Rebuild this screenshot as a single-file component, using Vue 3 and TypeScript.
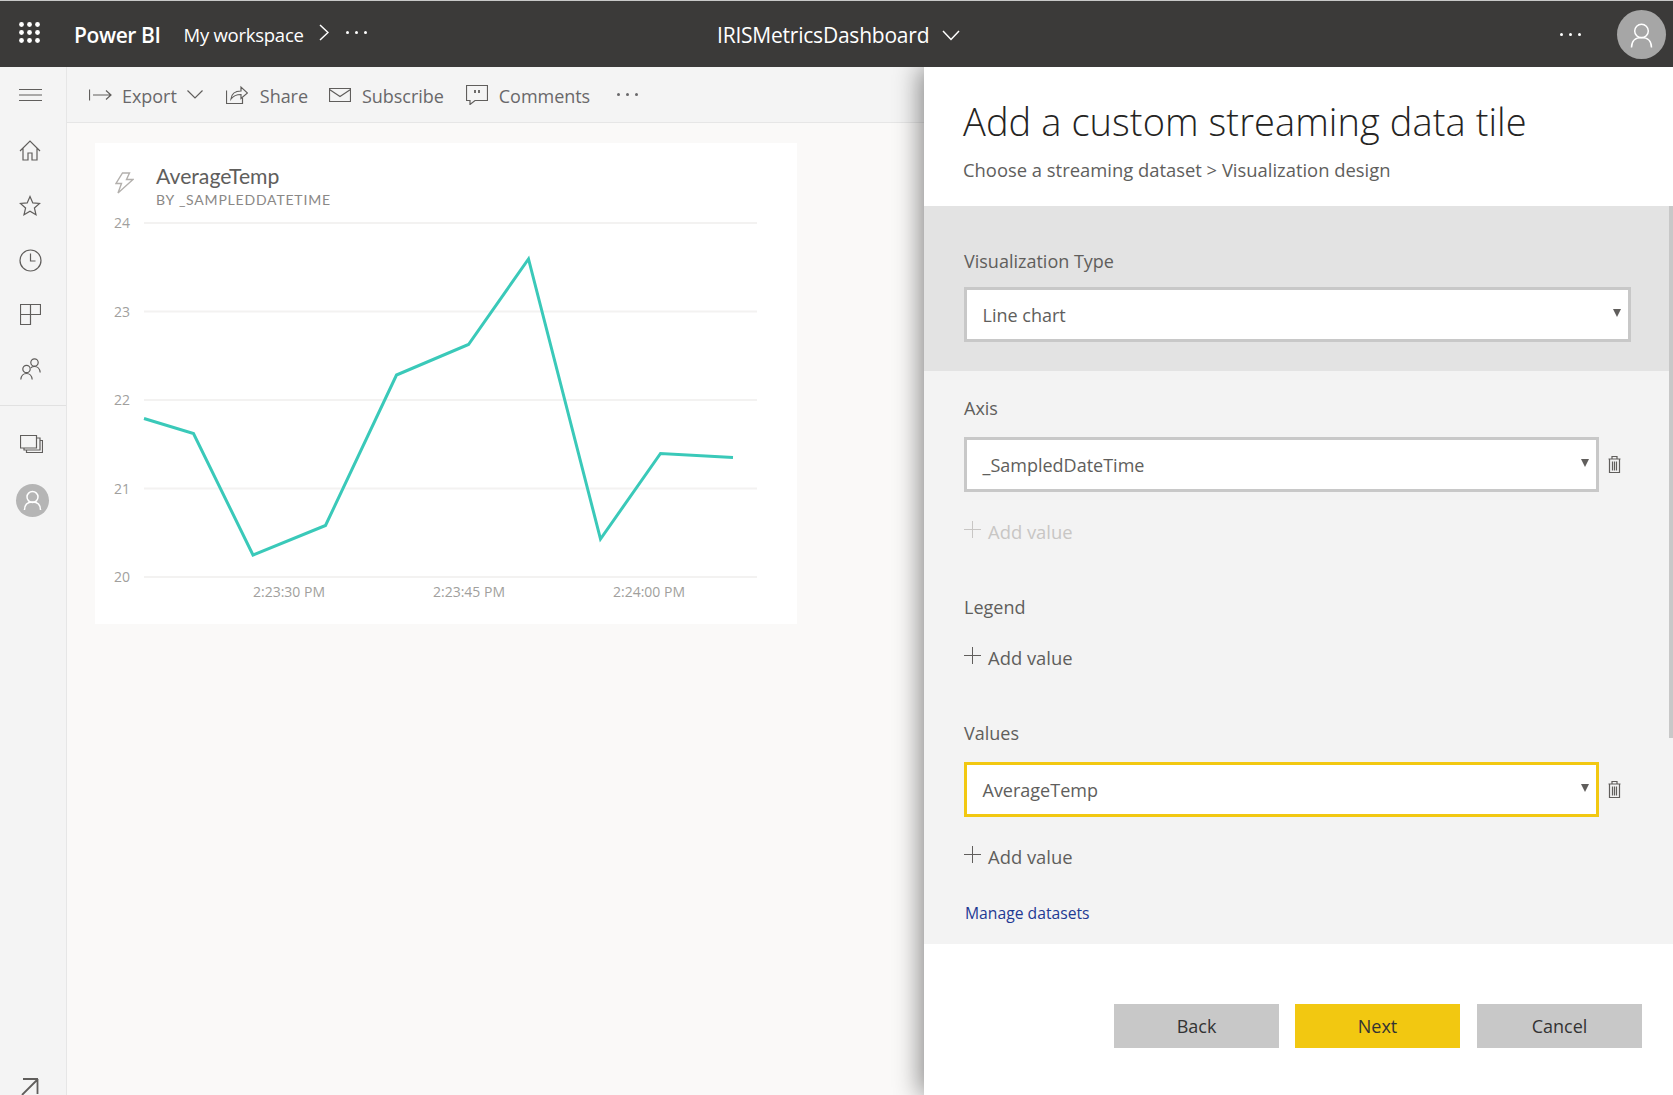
<template>
  <div class="app">
    <header class="topbar">
      <svg class="waffle" width="21" height="21" viewBox="0 0 21 21">
        <g fill="#fff">
          <template v-for="row in [2.5, 10.5, 18.5]" :key="row">
            <circle v-for="col in [2.5, 10.5, 18.5]" :key="col" :cx="col" :cy="row" r="2.4" />
          </template>
        </g>
      </svg>
      <span class="brand">Power BI</span>
      <span class="crumb">My workspace</span>
      <svg class="crumb-chevron" width="10" height="17" viewBox="0 0 10 17">
        <path d="M1 1l8 7.5L1 16" fill="none" stroke="#fff" stroke-width="1.5" />
      </svg>
      <span class="dots crumb-dots"><i></i><i></i><i></i></span>
      <span class="report-name">IRISMetricsDashboard</span>
      <svg class="name-chevron" width="18" height="11" viewBox="0 0 18 11">
        <path d="M1 1l8 8.5L17 1" fill="none" stroke="#fff" stroke-width="1.5" />
      </svg>
      <span class="dots top-dots"><i></i><i></i><i></i></span>
      <span class="top-avatar">
        <svg width="49" height="49" viewBox="0 0 49 49">
          <circle cx="24.5" cy="21" r="6.8" fill="none" stroke="#fff" stroke-width="1.5" />
          <path d="M14.5 37.5c0-6.5 4-10 10-10s10 3.500 10 10" fill="none" stroke="#fff" stroke-width="1.5" />
        </svg>
      </span>
    </header>

    <div class="body">
      <nav class="sidebar">
        <div class="side-slot first">
          <svg width="24" height="12" viewBox="0 0 24 12">
            <path d="M0 .5h23M0 6h23M0 11.500h23" stroke="#605e5c" stroke-width="1" />
          </svg>
        </div>
        <div class="side-slot">
          <svg width="22" height="21" viewBox="0 0 22 21" class="ico">
            <path d="M1 11L11 1l10 10M4 8.500V20h5v-7h4v7h5V8.500" />
          </svg>
        </div>
        <div class="side-slot">
          <svg width="22" height="22" viewBox="0 0 22 22" class="ico">
            <path d="M11 1.500l2.800 6.400 6.800.6-5.200 4.500 1.600 6.800L11 16.200l-6 3.600 1.600-6.800L1.400 8.500l6.800-.6z" />
          </svg>
        </div>
        <div class="side-slot">
          <svg width="23" height="23" viewBox="0 0 23 23" class="ico">
            <circle cx="11.500" cy="11.500" r="10.500" />
            <path d="M11.500 4.500v7.500h5" />
          </svg>
        </div>
        <div class="side-slot tight">
          <svg width="21" height="21" viewBox="0 0 21 21" class="ico">
            <path d="M.5.500h20v10h-10v10H.5zM.5 10.500h10M10.500.5v10" />
          </svg>
        </div>
        <div class="side-slot">
          <svg width="21" height="22" viewBox="0 0 21 22" class="ico">
            <circle cx="6.500" cy="11" r="3.700" />
            <path d="M.8 21.500c.4-3.600 2.400-6 5.700-6s5.300 2.400 5.700 6" />
            <circle cx="14.500" cy="4.500" r="3.700" />
            <path d="M10.800 9.800c1-.8 2.300-1.300 3.700-1.300 3.300 0 5.300 2.400 5.700 6" />
          </svg>
        </div>
        <div class="side-divider"></div>
        <div class="side-slot stack-slot">
          <svg width="23" height="18" viewBox="0 0 23 18" class="ico">
            <path d="M.5.500h16v12.500H.5zM17 3h3v12H4v-2M20 5.500h2.500v12h-16V15" />
          </svg>
        </div>
        <div class="side-slot avatar-slot">
          <span class="side-avatar">
            <svg width="33" height="33" viewBox="0 0 33 33">
              <circle cx="16.500" cy="13" r="5.500" fill="none" stroke="#fff" stroke-width="1.500" />
              <path d="M8.500 26c0-5 3-8 8-8s8 3 8 8" fill="none" stroke="#fff" stroke-width="1.500" />
            </svg>
          </span>
        </div>
        <svg class="expand" width="19" height="18" viewBox="0 0 19 18">
          <path d="M2 1h15M17 1L1 17M16.500 1v15" fill="none" stroke="#605e5c" stroke-width="1.800" />
        </svg>
      </nav>

      <main class="main">
        <div class="commandbar">
          <div class="tool export">
            <svg width="23" height="12" viewBox="0 0 23 12" class="ico">
              <path d="M.5.500v11M4 6h18M17 1.500L22 6l-5 4.500" />
            </svg>
            <span>Export</span>
            <svg width="16" height="9" viewBox="0 0 16 9" class="ico">
              <path d="M.5.500L8 8l7.500-7.500" />
            </svg>
          </div>
          <div class="tool">
            <svg width="22" height="19" viewBox="0 0 22 19" class="ico">
              <path d="M.5 5.500v13h16V13M5 14c.5-5 4-8 10-8V2l6.500 6-6.500 5.500V9.500c-4 0-7.500 1-10 4.500z" />
            </svg>
            <span>Share</span>
          </div>
          <div class="tool narrow">
            <svg width="22" height="14" viewBox="0 0 22 14" class="ico">
              <path d="M.5.500h21v13H.5zM.5 1.500L11 8.500l10.500-7" />
            </svg>
            <span>Subscribe</span>
          </div>
          <div class="tool narrow">
            <svg width="22" height="20" viewBox="0 0 22 20" class="ico">
              <path d="M.5.500h21v15H9L4 19.500v-4H.5z" />
              <path d="M9 5v3M13 5v3" stroke-width="1.800" />
            </svg>
            <span>Comments</span>
          </div>
          <span class="dots bar-dots"><i></i><i></i><i></i></span>
        </div>

        <section class="card">
          <div class="card-head">
            <svg width="19" height="22" viewBox="0 0 19 22" class="bolt">
              <path d="M7.500 1h7l-3 6.500h6.500L3 21l3.500-9.500H1z" />
            </svg>
            <div>
              <div class="card-title">AverageTemp</div>
              <div class="card-sub">BY _SAMPLEDDATETIME</div>
            </div>
          </div>
          <svg class="chart" width="702" height="413" viewBox="95 210 702 413">
            <g v-for="t in yTicks" :key="t.label">
              <line :x1="144" :x2="757" :y1="t.y" :y2="t.y" stroke="#f3f2f1" stroke-width="2" />
              <text x="114" :y="t.y + 5" class="axis">{{ t.label }}</text>
            </g>
            <text v-for="t in xTicks" :key="t.label" :x="t.x" y="597" text-anchor="middle" class="axis">{{ t.label }}</text>
            <polyline :points="linePoints" fill="none" stroke="#3ac9b9" stroke-width="3" />
          </svg>
        </section>
      </main>

      <aside class="panel">
        <div class="panel-head">
          <h1>Add a custom streaming data tile</h1>
          <p>Choose a streaming dataset &gt; Visualization design</p>
        </div>
        <div class="panel-scroll">
          <div class="viz-section">
            <div class="field-label">Visualization Type</div>
            <div class="select wide">Line chart</div>
          </div>
          <div class="form-section">
            <div class="field-label">Axis</div>
            <div class="select-row">
              <div class="select">_SampledDateTime</div>
              <svg width="13" height="17" viewBox="0 0 13 17" class="ico trash">
                <path d="M.5 3h12M4 3V.5h5V3M1.500 3v13.500h10V3M4.500 5.500v9M6.500 5.500v9M8.500 5.500v9" />
              </svg>
            </div>
            <div class="add-value disabled"><span class="plus"></span>Add value</div>

            <div class="field-label spaced">Legend</div>
            <div class="add-value near"><span class="plus"></span>Add value</div>

            <div class="field-label spaced">Values</div>
            <div class="select-row">
              <div class="select">AverageTemp</div>
              <svg width="13" height="17" viewBox="0 0 13 17" class="ico trash">
                <path d="M.5 3h12M4 3V.5h5V3M1.500 3v13.500h10V3M4.500 5.500v9M6.500 5.500v9M8.500 5.500v9" />
              </svg>
            </div>
            <div class="add-value"><span class="plus"></span>Add value</div>
            <a class="manage">Manage datasets</a>
          </div>
          <div class="scroll-thumb"></div>
        </div>
        <div class="panel-foot">
          <button class="btn">Back</button>
          <button class="btn primary">Next</button>
          <button class="btn">Cancel</button>
        </div>
      </aside>
    </div>
  </div>
</template>

<script setup lang="ts">
const yTicks = [
  { label: '24', y: 223 },
  { label: '23', y: 311.5 },
  { label: '22', y: 400 },
  { label: '21', y: 488.5 },
  { label: '20', y: 577 },
]

const xTicks = [
  { label: '2:23:30 PM', x: 289 },
  { label: '2:23:45 PM', x: 469 },
  { label: '2:24:00 PM', x: 649 },
]

const points: [number, number][] = [
  [144, 418.5], [193.5, 433.5], [253, 555], [325.5, 525.5], [396.5, 375],
  [468.5, 344.5], [528.5, 259], [600.5, 539], [660.5, 453.5], [733, 457.5],
]

const linePoints = points.map((p) => p.join(',')).join(' ')
</script>

<style>
html, body {
  margin: 0;
  background: #faf9f8;
}
</style>

<style scoped>
.app {
  width: 1673px;
  height: 1095px;
  overflow: hidden;
  display: flex;
  flex-direction: column;
  font-family: "Open Sans", "Noto Sans", sans-serif;
  color: #605e5c;
  border-top: 1px solid #c8c8c8;
  box-sizing: border-box;
}

.topbar {
  position: relative;
  z-index: 3;
  height: 66px;
  flex: none;
  display: flex;
  align-items: center;
  padding-left: 19px;
  background: #3b3a39;
  color: #fff;
}

.waffle { margin-top: -3px; }

.brand {
  margin-left: 34px;
  padding-top: 1px;
  font-size: 21px;
  font-weight: 600;
  letter-spacing: -0.4px;
}

.crumb {
  margin-left: 23px;
  font-size: 18.5px;
  letter-spacing: -0.25px;
}

.crumb-chevron { margin-left: 15px; margin-top: -3px; }

.dots {
  display: inline-flex;
  gap: 6px;
}

.dots i {
  width: 3px;
  height: 3px;
  border-radius: 50%;
  background: currentColor;
}

.crumb-dots { margin-left: 17px; margin-top: -4px; }

.report-name {
  position: absolute;
  left: 717px;
  padding-top: 1px;
  font-size: 21px;
  letter-spacing: -0.22px;
}

.name-chevron {
  position: absolute;
  left: 942px;
  top: 29px;
}

.top-dots { margin-left: auto; margin-right: 36px; }

.top-avatar {
  width: 49px;
  height: 49px;
  margin-right: 7px;
  border-radius: 50%;
  background: #a6a6a6;
}

.top-avatar svg { display: block; }

.body {
  flex: 1;
  min-height: 0;
  display: flex;
}

.sidebar {
  position: relative;
  width: 66px;
  flex: none;
  display: flex;
  flex-direction: column;
  background: #f4f4f4;
  border-right: 1px solid #e6e6e6;
  overflow: hidden;
}

.side-slot {
  width: 60px;
  height: 55px;
  flex: none;
  display: flex;
  align-items: center;
  justify-content: center;
}

.side-slot.first { height: 56px; padding-left: 2px; box-sizing: border-box; }
.side-slot.tight { height: 53px; }
.side-slot.stack-slot { width: 62px; height: 51px; }

.side-divider {
  height: 1px;
  flex: none;
  margin: 9px 0 12px;
  background: #e1e1e1;
}

.avatar-slot { width: 65px; height: 62px; }

.side-avatar {
  width: 33px;
  height: 33px;
  border-radius: 50%;
  background: #b5b5b5;
}

.side-avatar svg { display: block; }

.expand {
  margin: auto 0 -1px 21px;
  flex: none;
}

.ico {
  fill: none;
  stroke: #605e5c;
  stroke-width: 1.2;
  flex: none;
}

.main {
  flex: 1;
  min-width: 0;
  background: #faf9f8;
}

.commandbar {
  height: 55px;
  display: flex;
  align-items: center;
  padding-left: 22px;
  background: #f4f4f4;
  border-bottom: 1px solid #e6e6e6;
  font-size: 18px;
  color: #69686a;
}

.tool {
  display: flex;
  align-items: center;
  gap: 12px;
  margin-right: 21px;
}

.tool span { padding-top: 2px; }
.tool span:nth-child(2) { letter-spacing: -0.04px; }
.tool.export { gap: 10px; margin-right: 23px; }
.tool.narrow { gap: 11px; margin-right: 22px; }

.bar-dots { margin-left: 5px; margin-top: 0; }

.card {
  width: 702px;
  height: 481px;
  margin: 20px 0 0 28px;
  background: #fff;
}

.card-head {
  display: flex;
  gap: 22px;
  padding: 20px 0 0 20px;
  font-family: Lato, Roboto, sans-serif;
}

.bolt {
  margin-top: 9px;
  fill: none;
  stroke: #b3b0ad;
  stroke-width: 1.4;
  flex: none;
}

.card-title {
  font-size: 21.2px;
  line-height: 27px;
  color: #605e5c;
  font-weight: 400;
}

.card-sub {
  font-size: 14px;
  line-height: 20px;
  letter-spacing: 0.8px;
  color: #8a8886;
}

.chart { display: block; }

.axis {
  font-family: "Open Sans", sans-serif;
  font-size: 14px;
  fill: #a19f9d;
}

.panel {
  position: relative;
  z-index: 2;
  width: 749px;
  flex: none;
  display: flex;
  flex-direction: column;
  background: #fff;
  box-shadow: -4px 0 24px rgba(0, 0, 0, 0.45);
}

.panel-head {
  height: 139px;
  flex: none;
  padding-left: 39px;
  box-sizing: border-box;
  color: #252423;
}

.panel-head h1 {
  margin: 0;
  padding-top: 30px;
  font-size: 38px;
  line-height: 48px;
  font-weight: 300;
  letter-spacing: 0.08px;
}

.panel-head p {
  margin: 12px 0 0;
  font-size: 18.4px;
  line-height: 26px;
  color: #605e5c;
}

.panel-scroll {
  position: relative;
}

.scroll-thumb {
  position: absolute;
  top: 0;
  right: 0;
  width: 4px;
  height: 532px;
  background: #c8c8c8;
}

.viz-section {
  height: 165px;
  padding: 43px 0 0 40px;
  box-sizing: border-box;
  background: #e3e3e3;
}

.form-section {
  height: 573px;
  padding: 25px 0 0 40px;
  box-sizing: border-box;
  background: #f3f3f3;
}

.field-label {
  font-size: 18px;
  line-height: 24px;
  color: #605e5c;
}

.field-label.spaced { margin-top: 52px; }

.select {
  position: relative;
  width: 635px;
  height: 55px;
  margin-top: 17px;
  padding-left: 15.5px;
  box-sizing: border-box;
  display: flex;
  align-items: center;
  background: #fff;
  border: 3px solid #c8c8c8;
  font-size: 18px;
  color: #605e5c;
}

.select::after {
  content: "";
  position: absolute;
  right: 7px;
  top: 19px;
  border-left: 4px solid transparent;
  border-right: 4px solid transparent;
  border-top: 8px solid #605e5c;
}

.select.wide { width: 667px; margin-top: 14px; }
.field-label.spaced + .select-row .select { border-color: #f2c811; }

.select-row {
  display: flex;
  align-items: center;
  gap: 9px;
}

.trash { margin-top: 17px; }

.add-value {
  display: flex;
  align-items: center;
  gap: 7px;
  height: 24px;
  margin-top: 27px;
  font-size: 18.4px;
  color: #605e5c;
}

.add-value.near { margin-top: 26px; }
.add-value.disabled { color: #c8c6c4; }

.plus {
  position: relative;
  width: 17px;
  height: 17px;
  margin-top: -3px;
  background:
    linear-gradient(currentColor, currentColor) center / 100% 1px no-repeat,
    linear-gradient(currentColor, currentColor) center / 1px 100% no-repeat;
}

.manage {
  display: block;
  margin: 33px 0 0 1px;
  font-size: 15.7px;
  line-height: 24px;
  color: #1f3a93;
}

.panel-foot {
  flex: 1;
  display: flex;
  justify-content: flex-end;
  gap: 16px;
  padding: 60px 31px 0 0;
  background: #fff;
}

.btn {
  width: 165px;
  height: 44px;
  border: 0;
  padding: 0;
  background: #c8c8c8;
  font-family: inherit;
  font-size: 18px;
  color: #333;
}

.btn.primary { background: #f2c811; margin-right: 1px; }
</style>
